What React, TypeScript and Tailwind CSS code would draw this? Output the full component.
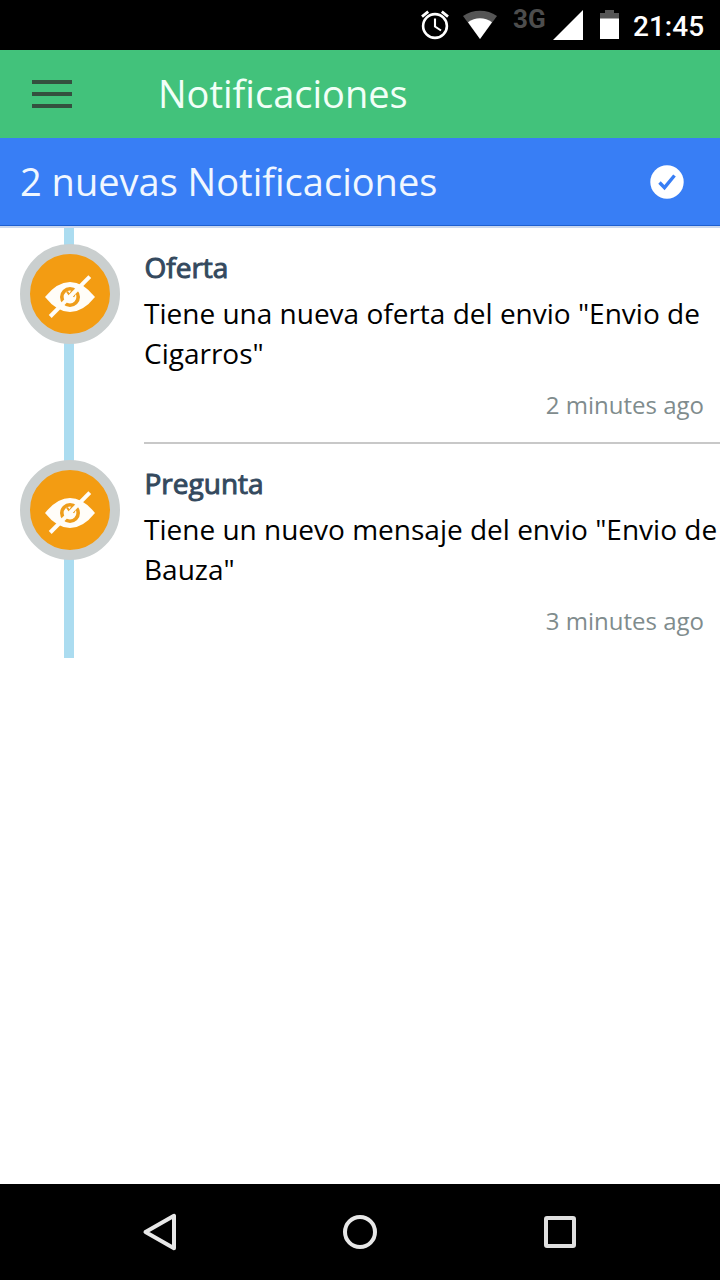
const notifications = [
  { title: 'Oferta', text: 'Tiene una nueva oferta del envio "Envio de Cigarros"', time: '2 minutes ago' },
  { title: 'Pregunta', text: 'Tiene un nuevo mensaje del envio "Envio de Bauza"', time: '3 minutes ago' },
];

function StatusBar() {
  return (
    <div className="flex h-[50px] shrink-0 items-start bg-black pl-[420px] text-white">
      <svg className="mt-[10px] h-[30px] w-[30px] shrink-0" viewBox="0 0 30 30" fill="none" stroke="currentColor">
        <circle cx="15" cy="16" r="11.9" strokeWidth="2.6" />
        <path d="M15 8.500v8l6 4" strokeWidth="2.1" />
        <path d="M2 6.600 8.200 1.600M28 6.600 21.800 1.600" strokeWidth="2.800" />
      </svg>
      <svg className="mt-[10px] ml-[13px] h-[30px] w-[34px] shrink-0" viewBox="0 0 34 30">
        <path d="M0 6C10-1 24-1 34 6L17 29Z" fill="#555" />
        <path d="M5 12.200C12 6.800 22 6.800 29 12.200L17 29Z" fill="#fff" />
      </svg>
      <span className="mt-[5px] ml-[16px] w-[33px] font-['Roboto'] text-[26px] leading-[28px] font-bold text-[#4d4d4d]">3G</span>
      <svg className="mt-[10px] ml-[7px] h-[30px] w-[30px] shrink-0" viewBox="0 0 30 30">
        <path d="M30 0V30H0Z" fill="#fff" />
      </svg>
      <svg className="mt-[10px] ml-[17px] h-[30px] w-[19px] shrink-0" viewBox="0 0 19 30">
        <path d="M0 3H5V0H14V3H19V9H0Z" fill="#555" />
        <path d="M0 8.500H19V29H0Z" fill="#fff" />
      </svg>
      <span className="mt-[11px] ml-[14px] font-['Roboto'] text-[28px] leading-[32px] font-medium">21:45</span>
    </div>
  );
}

function EyeOff() {
  return (
    <svg className="h-[80px] w-[80px]" viewBox="0 0 80 80" fill="none">
      <path d="M15 43Q27 28 40 28T65 43Q53 58 40 58T15 43Z" fill="#fffdf8" />
      <circle cx="40" cy="43" r="8.200" stroke="#ee9d1b" strokeWidth="3.600" />
      <path d="M37 37.500 39.500 41 43 35.500" stroke="#ee9d1b" strokeWidth="2" />
      <path d="M43.500 43 46 38.500" stroke="#ee9d1b" strokeWidth="1.500" />
      <path d="M20.200 62.500 59.800 22.700" stroke="#fffdf8" strokeWidth="4" />
    </svg>
  );
}

export default function App() {
  return (
    <div className="flex h-[1280px] w-[720px] flex-col overflow-hidden bg-white font-['Open_Sans','Noto_Sans',sans-serif]">
      <StatusBar />
      <header className="flex h-[88px] shrink-0 items-center bg-[#42c27b] pl-8">
        <div className="flex w-10 flex-col gap-2">
          <div className="h-1 bg-[#34503f]" />
          <div className="h-1 bg-[#34503f]" />
          <div className="h-1 bg-[#34503f]" />
        </div>
        <h1 className="mb-[2px] ml-[86px] text-[38px] leading-[56px] text-[#f1fff7]">Notificaciones</h1>
      </header>
      <div className="flex h-[88px] shrink-0 items-center justify-between border-b border-[#1d5fd0] bg-[#387ef5] pr-[36px] pl-5">
        <h2 className="mb-px text-[38px] leading-[56px] text-[#f0f7ff]">2 nuevas Notificaciones</h2>
        <svg className="h-[34px] w-[34px]" viewBox="0 0 34 34" fill="none">
          <circle cx="17" cy="17" r="16.700" fill="#fff" />
          <path d="m9.500 17.500 5 5.200L24.500 10.500" stroke="#387ef5" strokeWidth="3.400" />
        </svg>
      </div>
      <div className="h-[2px] shrink-0 bg-[#cbd8ee]" />
      <main className="grow">
        {notifications.map((item, index) => (
          <article key={item.title} className="flex h-[216px]">
            <div className="grid w-[144px] shrink-0 grid-cols-1 grid-rows-1">
              <div className={`col-start-1 row-start-1 ml-16 w-[10px] bg-[#abdcf0] ${index === 1 ? 'h-[214px]' : 'h-[216px]'}`} />
              <div className="z-10 col-start-1 row-start-1 mt-4 ml-5 h-[100px] w-[100px] rounded-full border-[10px] border-[#cacfcf] bg-[#f39c12]">
                <EyeOff />
              </div>
            </div>
            <div className={`flex grow flex-col ${index === 0 ? 'border-b-2 border-[#c8c8c8]' : ''}`}>
              <h3 className="mt-[19px] pl-[0.5px] text-[28px] leading-[40px] text-[#34495e] [-webkit-text-stroke:1px_#34495e]">{item.title}</h3>
              <p className="mt-[6px] text-[28px] leading-[40px] text-black">{item.text}</p>
              <time className="mt-[15px] mr-4 self-end text-[24px] leading-[34px] text-[#7f8c8d]">{item.time}</time>
            </div>
          </article>
        ))}
      </main>
      <nav className="flex h-24 shrink-0 items-center bg-black pl-[142px]">
        <svg className="h-[40px] w-[36px]" viewBox="0 0 36 40" fill="none">
          <path d="M3.500 20 32 3.800V36.200Z" stroke="#e8e8e8" strokeWidth="4" strokeLinejoin="round" />
        </svg>
        <div className="ml-[165px] h-[34px] w-[34px] rounded-full border-4 border-[#e8e8e8]" />
        <div className="ml-[167px] h-8 w-8 rounded-[3px] border-4 border-[#e0e0e0]" />
      </nav>
    </div>
  );
}
